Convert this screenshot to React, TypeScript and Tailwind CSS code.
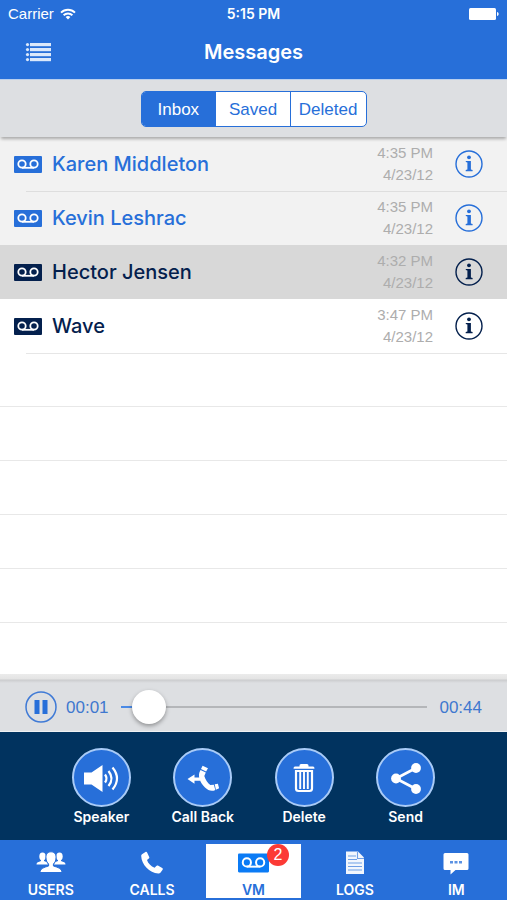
import { useState } from "react";
import type { ReactNode } from "react";

const sans = "font-['Inter','Liberation_Sans',sans-serif]";

type Message = { name: string; time: string; date: string; unread: boolean };

const messages: Message[] = [
  { name: "Karen Middleton", time: "4:35 PM", date: "4/23/12", unread: true },
  { name: "Kevin Leshrac", time: "4:35 PM", date: "4/23/12", unread: true },
  { name: "Hector Jensen", time: "4:32 PM", date: "4/23/12", unread: false },
  { name: "Wave", time: "3:47 PM", date: "4/23/12", unread: false },
];

function VoicemailIcon({ className }: { className: string }) {
  return (
    <svg viewBox="0 0 28 17" className={className} aria-hidden="true">
      <rect width="28" height="17" rx="1" fill="currentColor" />
      <g fill="none" stroke="white" strokeWidth="1.8">
        <circle cx="8" cy="8" r="3.7" />
        <circle cx="20" cy="8" r="3.7" />
        <path d="M8 11.8h12" />
      </g>
    </svg>
  );
}

function InfoIcon() {
  return (
    <svg viewBox="0 0 28 28" className="size-7" aria-hidden="true">
      <circle cx="14" cy="14" r="13" fill="none" stroke="currentColor" strokeWidth="1.4" />
      <circle cx="14" cy="7.3" r="1.9" fill="currentColor" />
      <path d="M10.8 10.900h5.100v8.600l1.700.5v1.200h-6.900V20l1.700-.5v-7l-1.600-.4z" fill="currentColor" />
    </svg>
  );
}

function StatusBar() {
  return (
    <div className="flex h-7 items-center px-2 text-white">
      <div className="flex flex-1 items-center gap-1.5 text-[15px]">
        Carrier
        <svg viewBox="0 0 16 12" className="h-3 w-4" aria-hidden="true">
          <g fill="none" stroke="white" strokeWidth="1.9">
            <path d="M1 4.6a10 10 0 0 1 14 0" />
            <path d="M3.6 7.3a6.3 6.3 0 0 1 8.8 0" />
          </g>
          <path d="M8 11.6 5.6 9.1a3.5 3.5 0 0 1 4.8 0z" fill="white" />
        </svg>
      </div>
      <div className={`text-sm font-semibold ${sans}`}>5:15 PM</div>
      <div className="flex flex-1 justify-end">
        <svg viewBox="0 0 30 12" className="h-3 w-[30px]" aria-hidden="true">
          <rect width="27" height="12" rx="1.5" fill="white" />
          <path d="M28 4c2.2.5 2.2 3.500 0 4z" fill="white" />
        </svg>
      </div>
    </div>
  );
}

function Header() {
  return (
    <header className="grid h-[51px] grid-cols-[1fr_auto_1fr] items-center px-6 pb-1 text-white">
      <button type="button" aria-label="Menu" className="w-7">
        <svg viewBox="0 0 28 20" className="h-5 w-7" fill="#dbe8fb" aria-hidden="true">
          {[1, 6, 11, 16].map((y) => (
            <g key={y}>
              <circle cx="3.5" cy={y + 1.6} r="1.6" />
              <rect x="6" y={y} width="21" height="3.2" />
            </g>
          ))}
        </svg>
      </button>
      <h1 className={`text-xl font-semibold ${sans}`}>Messages</h1>
    </header>
  );
}

function Segments() {
  const [active, setActive] = useState("Inbox");
  return (
    <div className="relative z-10 flex h-[58px] justify-center border-t border-[#b9cfee] bg-[#dddfe2] pt-[11px] shadow-[0_3px_3px_-1px_rgba(0,0,0,0.3)]">
      <div className="grid h-9 w-[226px] grid-cols-3 divide-x divide-[#276fd9] overflow-hidden rounded-[5px] border border-[#276fd9] bg-white">
        {["Inbox", "Saved", "Deleted"].map((label) => (
          <button
            key={label}
            type="button"
            aria-pressed={label === active}
            onClick={() => setActive(label)}
            className={`pt-0.5 text-[17px] ${label === active ? "bg-[#276fd9] text-white" : "text-[#276fd9]"}`}
          >
            {label}
          </button>
        ))}
      </div>
    </div>
  );
}

function MessageRow({ message, selected }: { message: Message; selected: boolean }) {
  const background = selected ? "bg-[#d8d8d8]" : message.unread ? "bg-[#f2f2f2]" : "bg-white";
  const color = message.unread ? "text-[#276fd9]" : "text-[#04204d]";
  return (
    <li className={background}>
      <div className={`flex h-[54px] items-center pl-3.5 pr-6 ${color}`}>
        <VoicemailIcon className="h-[17px] w-7" />
        <span className={`ml-2.5 flex-1 text-xl font-medium ${sans}`}>{message.name}</span>
        <span className="mr-[22px] text-right text-[15px] leading-[22px] text-[#adadad]">
          <span className="block">{message.time}</span>
          <span className="block">{message.date}</span>
        </span>
        <button type="button" aria-label={`Details for ${message.name}`}>
          <InfoIcon />
        </button>
      </div>
    </li>
  );
}

function MessageList() {
  return (
    <main className="flex flex-1 flex-col bg-white">
      <ul>
        <MessageRow message={messages[0]} selected={false} />
        <li aria-hidden="true" className="relative -mb-px ml-[26px] h-px bg-[#dedede]" />
        <MessageRow message={messages[1]} selected={false} />
        <MessageRow message={messages[2]} selected />
        <MessageRow message={messages[3]} selected={false} />
        <li aria-hidden="true" className="relative -mb-px ml-[26px] h-px bg-[#e6e6e6]" />
        {[0, 1, 2, 3, 4].map((row) => (
          <li key={row} aria-hidden="true" className="h-[54px] border-b border-[#e8e8e8]" />
        ))}
      </ul>
    </main>
  );
}

function Player() {
  const length = 44;
  const [position, setPosition] = useState(1.8);
  const clock = (seconds: number) => `00:${String(Math.floor(seconds)).padStart(2, "0")}`;
  const played = (position / length) * 100;
  return (
    <section
      aria-label="Playback"
      className="flex h-[58px] items-center border-b border-[#eef0f2] bg-[#dddfe2] bg-[linear-gradient(#ebebeb,#e4e4e4_5px,#cbccce_6px,#dddfe2_9px)] px-[25px] pt-2 text-[17px] text-[#3f78cf]"
    >
      <button type="button" aria-label="Pause">
        <svg viewBox="0 0 32 32" className="size-8" aria-hidden="true">
          <circle cx="16" cy="16" r="15" fill="none" stroke="#3f7ad6" strokeWidth="1.5" />
          <path d="M9.500 9h5v14h-5zM17.500 9h5v14h-5z" fill="#276fd9" />
        </svg>
      </button>
      <span className="ml-[9px] pt-0.5">{clock(position)}</span>
      <input
        type="range"
        aria-label="Position"
        min={0}
        max={length}
        step="any"
        value={position}
        onChange={(event) => setPosition(Number(event.target.value))}
        style={{
          backgroundImage: `linear-gradient(to right, #4a8ae6 ${played + 4}%, #b4b6b9 ${played + 4}%)`,
        }}
        className="mx-3 h-[34px] min-w-0 flex-1 appearance-none bg-[length:100%_2px] bg-center bg-no-repeat [&::-webkit-slider-thumb]:size-[34px] [&::-webkit-slider-thumb]:appearance-none [&::-webkit-slider-thumb]:rounded-full [&::-webkit-slider-thumb]:bg-white [&::-webkit-slider-thumb]:shadow-[0_2px_4px_rgba(0,0,0,0.35)]"
      />
      <span className="pt-0.5">{clock(length)}</span>
    </section>
  );
}

function Action({ label, children }: { label: string; children: ReactNode }) {
  return (
    <button type="button" className={`flex flex-col items-center text-sm font-semibold text-white ${sans}`}>
      <span className="flex size-[59px] items-center justify-center rounded-full border-2 border-[#a9cbf7] bg-[#276fd9]">
        <svg viewBox="0 0 56 56" className="size-14 shrink-0" aria-hidden="true">
          {children}
        </svg>
      </span>
      <span className="leading-5">{label}</span>
    </button>
  );
}

function Actions() {
  return (
    <section aria-label="Actions" className="grid h-[108px] grid-cols-4 bg-[#01335f] px-[10%] pt-4">
      <Action label="Speaker">
        <path d="M11 22.500h7.500L29.500 15v27l-11-7.500H11z" fill="white" />
        <g fill="none" stroke="white" strokeWidth="2.2">
          <path d="M32 24.500q3 4 0 8" />
          <path d="M35.500 21q6 7.500 0 15" />
          <path d="M39.500 17.500q9 11 0 22" />
        </g>
      </Action>
      <Action label="Call Back">
        <path d="M12.500 29l7-4.500v3h5.500v3.200h-5.500v3z" fill="white" />
        <path d="M25.500 20l5.300 2.600-1.500 3.500c1 3.600 3.200 6.700 6 9l3.600-.4 1.400 5.200c-3.300 1.800-7.300.6-10.300-2.400C25 32.500 22 25.500 25.500 20z" fill="white" />
        <path d="M26 19l1.600-3.300 5.400 2.600-1.900 3.200zM39.700 34.300l3.200-.5 1.200 4.400-3.200 1.600z" fill="white" />
      </Action>
      <Action label="Delete">
        <path
          d="M23.500 16.500v-1q0-1.500 1.500-1.500h6q1.500 0 1.500 1.500v1h4.500q1.500 0 1.500 2.200h-21q0-2.200 1.500-2.200z"
          fill="white"
        />
        <path d="M20 21h16v17.500q0 2.500-2.500 2.500h-11Q20 41 20 38.500z" fill="none" stroke="white" strokeWidth="2.2" />
        <path d="M24.200 22v17M28 22v17M31.800 22v17" stroke="white" strokeWidth="1.9" />
      </Action>
      <Action label="Send">
        <path d="M38 18 18 28.500 38 39" fill="none" stroke="white" strokeWidth="2.7" />
        <circle cx="38" cy="18" r="4.9" fill="white" />
        <circle cx="18" cy="28.5" r="4.9" fill="white" />
        <circle cx="38" cy="39" r="4.9" fill="white" />
      </Action>
    </section>
  );
}

function UsersIcon() {
  return (
    <svg viewBox="0 0 30 24" className="h-6 w-[30px]" fill="white" aria-hidden="true">
      <ellipse cx="6.500" cy="5.500" rx="3.200" ry="4" />
      <ellipse cx="23.500" cy="5.500" rx="3.200" ry="4" />
      <path d="M5 8h3v2l3 1.300L12 13.500H.5c0-2.300 2-2.500 4.500-3.500zM25 8h-3v2l-3 1.300L18 13.500h11.500c0-2.300-2-2.500-4.500-3.500z" />
      <path
        d="M15 .8c3.300 0 5.200 2.200 5 6-.1 3-1.200 5-2.600 6.200v2c4.400 1.400 8.600 2.500 8.600 6.500H4c0-4 4.200-5.100 8.600-6.500v-2C11.200 11.800 10.100 9.800 10 6.800c-.2-3.800 1.700-6 5-6z"
        stroke="#276fd9"
      />
    </svg>
  );
}

function PhoneIcon() {
  return (
    <svg viewBox="0 0 24 24" className="size-6" fill="white" aria-hidden="true">
      <path d="M2 3.200 5.500 1c.7-.4 1.300-.1 1.600.5l2.100 4.400c.3.700.1 1.200-.4 1.600L7 9c1 3.300 4 6.400 7.600 7.800l1.700-1.900c.4-.5 1-.7 1.600-.3l4.300 2.500c.6.400.8 1 .4 1.600l-2.200 3.100c-.5.600-1.200.9-2.100.8C9.500 22 1.500 13.500 1.200 5c0-.8.2-1.300.8-1.800z" />
    </svg>
  );
}

function LogsIcon() {
  return (
    <svg viewBox="0 0 20 24" className="h-6 w-5" aria-hidden="true">
      <path d="M1 0.500h12l6 6V23H1z" fill="#f1f6fd" />
      <path d="M3 5h8M3 8.500h9M3 12h14M3 15.500h14M3 19h14M12.500 1v6.500H19" fill="none" stroke="#6f9fe6" strokeWidth="1.1" />
    </svg>
  );
}

function ChatIcon() {
  return (
    <svg viewBox="0 0 26 24" className="h-6 w-[26px]" aria-hidden="true">
      <path d="M2 2h22q1.500 0 1.500 1.500v14Q25.500 19 24 19H12.500L7.500 23.500V19H2Q.5 19 .5 17.500v-14Q.5 2 2 2z" fill="white" />
      <path d="M7 10h3v2.500H7zM11.500 10h3v2.500h-3zM16 10h3v2.500h-3z" fill="#5b92e3" />
    </svg>
  );
}

function Tab({ label, active = false, badge, children }: { label: string; active?: boolean; badge?: number; children: ReactNode }) {
  return (
    <a
      href={`#${label.toLowerCase()}`}
      aria-current={active ? "page" : undefined}
      className={`mx-[3px] mb-0.5 mt-1 flex flex-col items-center pt-[7px] text-sm font-semibold ${sans} ${
        active ? "bg-white text-[#276fd9]" : "text-white"
      }`}
    >
      <span className="relative flex h-6 items-center">
        {children}
        {badge !== undefined && (
          <span className="absolute -right-5 -top-[7px] flex size-[22px] items-center justify-center rounded-full bg-[#fc3a35] font-['Liberation_Sans',sans-serif] text-base font-normal text-white">
            {badge}
          </span>
        )}
      </span>
      <span className="mt-[7px] leading-4">{label}</span>
    </a>
  );
}

export default function App() {
  return (
    <div className="flex min-h-screen flex-col bg-[#276fd9] font-['Liberation_Sans',Arial,sans-serif]">
      <StatusBar />
      <Header />
      <Segments />
      <MessageList />
      <Player />
      <Actions />
      <nav aria-label="Sections" className="grid h-[60px] grid-cols-5">
        <Tab label="USERS"><UsersIcon /></Tab>
        <Tab label="CALLS"><PhoneIcon /></Tab>
        <Tab label="VM" active badge={2}>
          <VoicemailIcon className="h-5 w-[31px] text-[#0b7bf5]" />
        </Tab>
        <Tab label="LOGS"><LogsIcon /></Tab>
        <Tab label="IM"><ChatIcon /></Tab>
      </nav>
    </div>
  );
}
